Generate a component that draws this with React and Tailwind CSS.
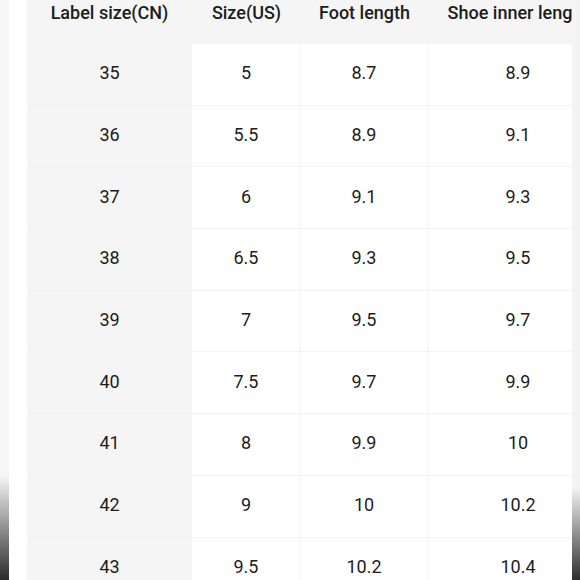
const rows = [
  ["35", "5", "8.7", "8.9"],
  ["36", "5.5", "8.9", "9.1"],
  ["37", "6", "9.1", "9.3"],
  ["38", "6.5", "9.3", "9.5"],
  ["39", "7", "9.5", "9.7"],
  ["40", "7.5", "9.7", "9.9"],
  ["41", "8", "9.9", "10"],
  ["42", "9", "10", "10.2"],
  ["43", "9.5", "10.2", "10.4"],
];

const cols = ["w-[165px]", "w-[109px]", "w-[127px]", "w-[180px]"];

export default function App() {
  return (
    <div className="flex h-[580px] w-[580px] overflow-hidden bg-white font-['Roboto',sans-serif] text-[18px] text-[#1c1c1c]">
      <div className="w-[9px] shrink-0 bg-[linear-gradient(to_bottom,#f6f6f6_0%,#f6f6f6_82%,#2b2b2b_100%)]" />
      <div className="w-[18px] shrink-0 bg-white" />
      <div className="w-[545px] shrink-0 overflow-hidden">
        <div className="w-[581px]">
          <div className="flex h-[44px] bg-[#f5f5f5] font-medium">
            {["Label size(CN)", "Size(US)", "Foot length", "Shoe inner length"].map((h, i) => (
              <div key={h} className={`${cols[i]} shrink-0 whitespace-nowrap pt-[1px] text-center leading-[24px]`}>
                {h}
              </div>
            ))}
          </div>
          {rows.map((r) => (
            <div key={r[0]} className="flex h-[61.7px] border-b border-[#f3f3f3]">
              {r.map((v, i) => (
                <div
                  key={i}
                  className={`${cols[i]} flex shrink-0 items-center justify-center pb-[3px] ${
                    i === 0 ? "bg-[#f5f5f5]" : "bg-white"
                  } ${i === 1 || i === 2 ? "border-r border-[#f4f4f4]" : ""}`}
                >
                  {v}
                </div>
              ))}
            </div>
          ))}
        </div>
      </div>
      <div className="w-[8px] shrink-0 bg-[linear-gradient(to_bottom,#f4f4f4_0%,#f4f4f4_84%,#2e2e2e_100%)]" />
    </div>
  );
}
